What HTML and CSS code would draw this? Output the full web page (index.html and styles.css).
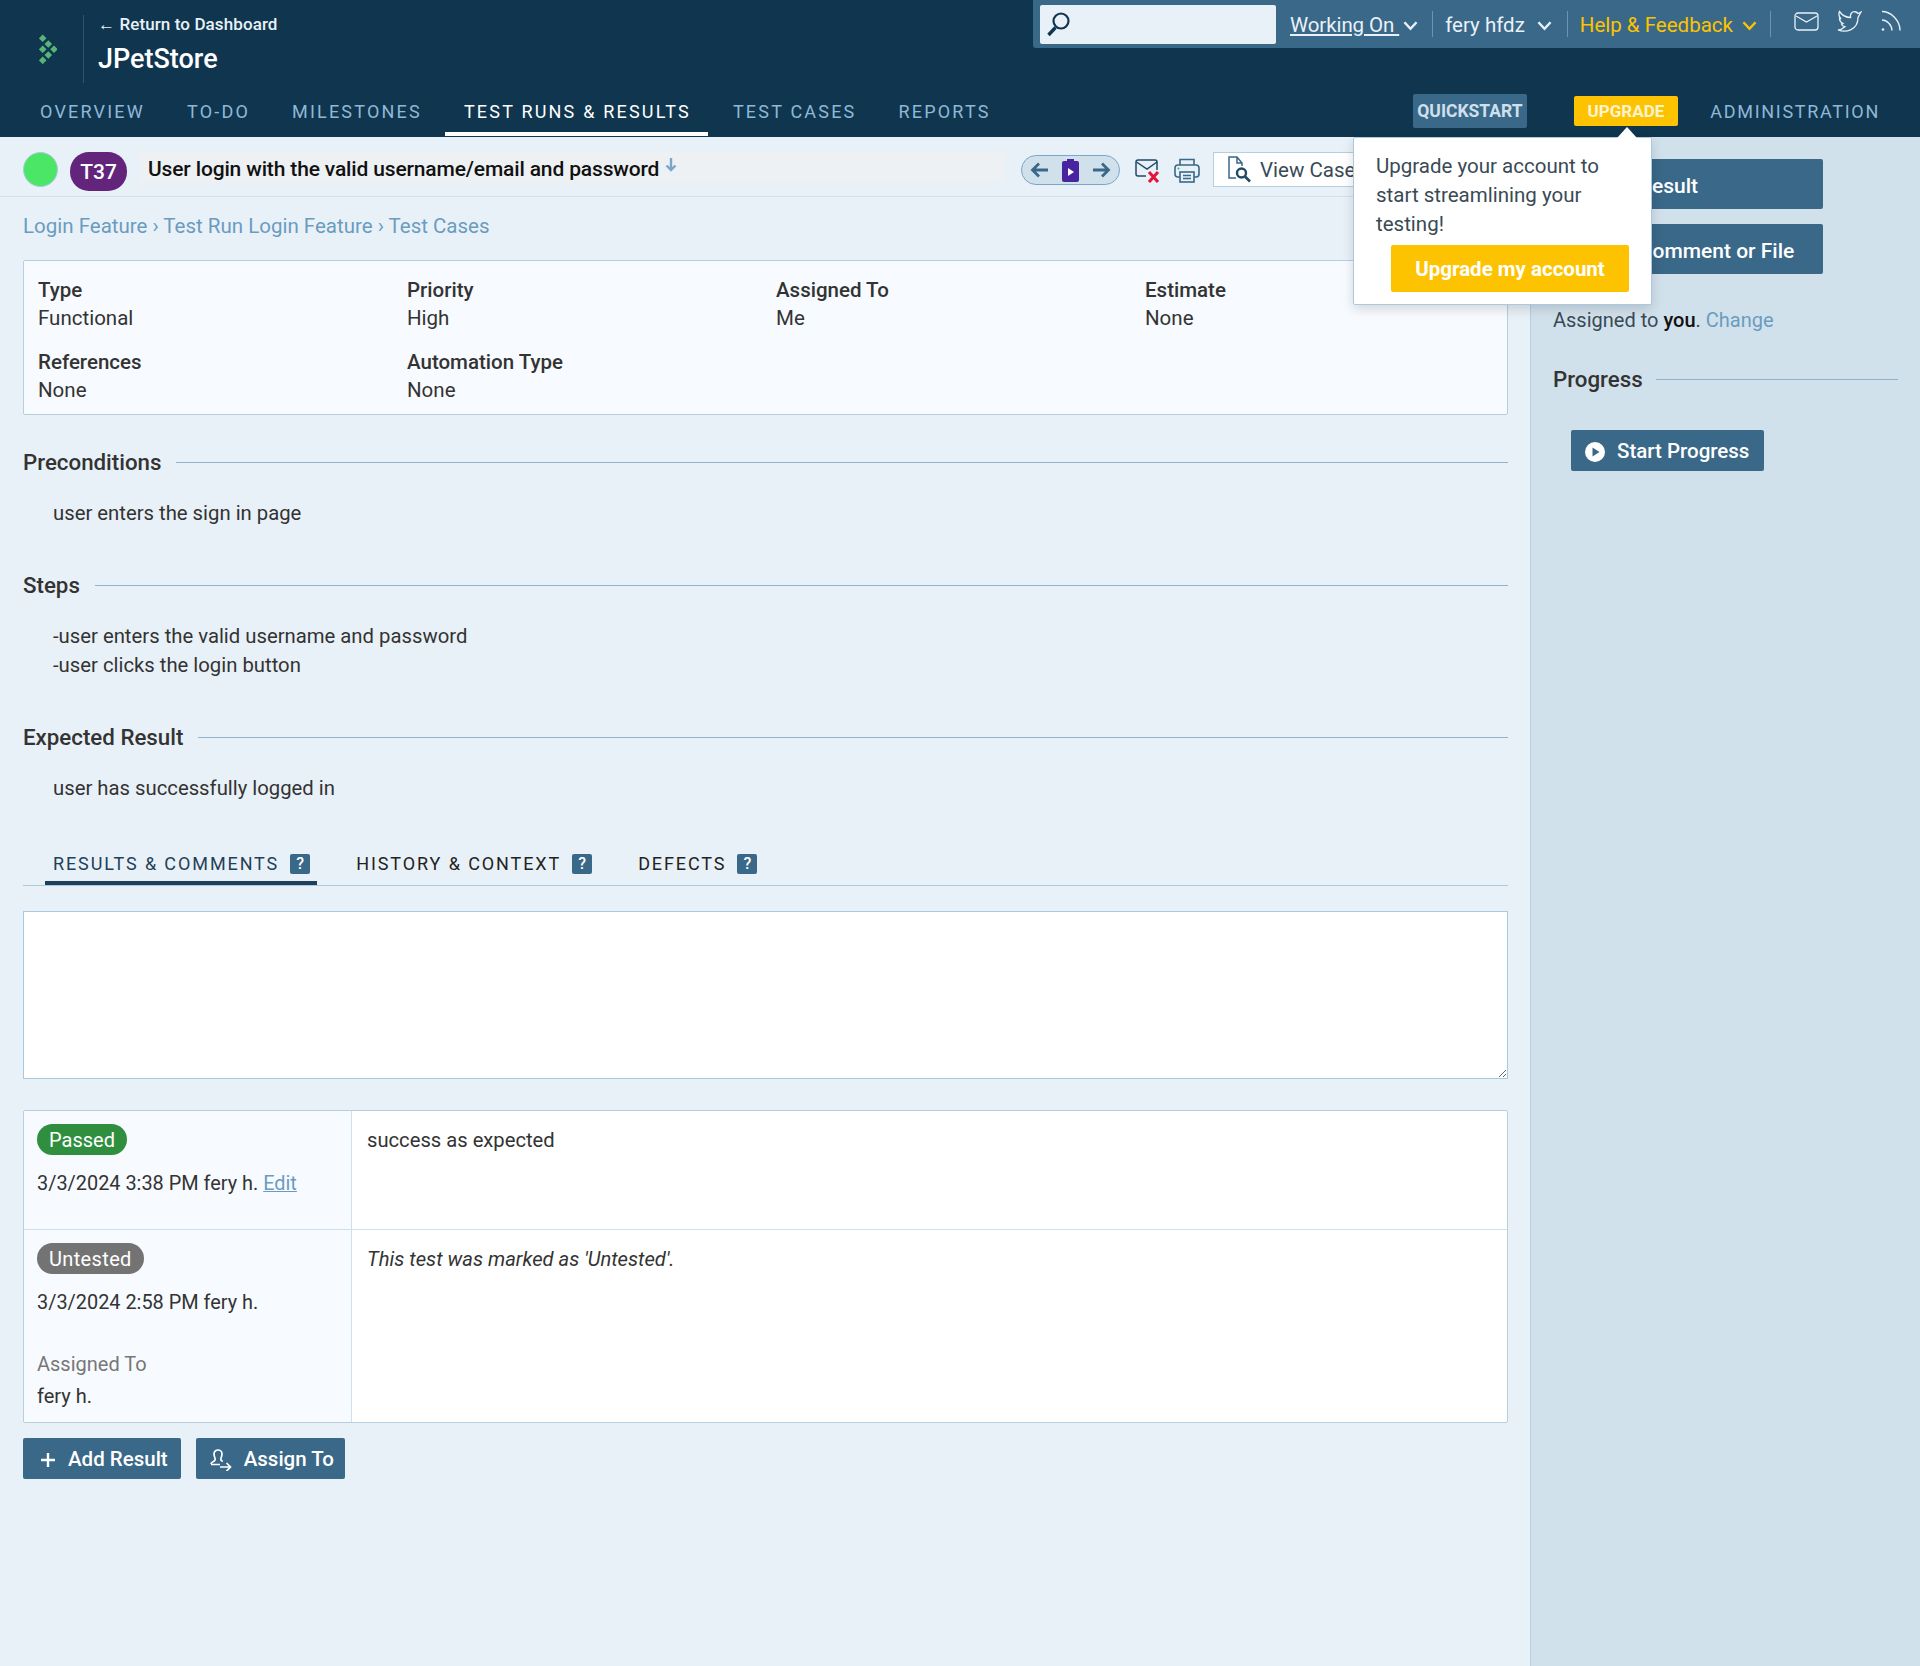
FILE: index.html
```html
<!DOCTYPE html>
<html lang="en">
<head>
  <meta charset="UTF-8">
  <meta name="viewport" content="width=device-width, initial-scale=1.0">
  <title>T37: User login with the valid username/email and password</title>
  <link rel="stylesheet" href="styles.css">
</head>
<body>

  <header class="header">
    <div class="header-top">
      <div class="brand">
        <svg class="logo" width="18" height="30" viewBox="0 0 18 30">
          <g fill="#57b677">
            <path d="M3.700.5l3.800 3.800-3.800 3.800L-.1 4.300z"/>
            <path d="M9.300 6.200l3.800 3.800-3.800 3.800L5.500 10z"/>
            <path d="M3.700 11.500l3.800 3.800-3.800 3.800-3.800-3.800z"/>
            <path d="M15 11.500l3.800 3.800-3.800 3.800-3.800-3.800z"/>
            <path d="M9.300 17.200l3.800 3.800-3.800 3.800L5.500 21z"/>
            <path d="M3.700 22.500l3.800 3.800-3.800 3.800-3.800-3.800z"/>
          </g>
        </svg>
        <div class="brand-text">
          <a class="back-link" href="#">← Return to Dashboard</a>
          <div class="project-name">JPetStore</div>
        </div>
      </div>
      <div class="topbar">
        <div class="search">
          <svg width="26" height="26" viewBox="0 0 26 26" fill="none" stroke="#10364f" stroke-width="2.200">
            <circle cx="16" cy="10" r="7.500"/>
            <path d="M10.500 16.500L3.500 24" stroke-width="3.400"/>
          </svg>
        </div>
        <a class="topbar-link first" href="#"><span class="underlined">Working On&nbsp;</span> <svg class="chevron" width="17" height="11" viewBox="0 0 14 10"><path d="M1.500 2l5.500 6 5.500-6"/></svg></a>
        <a class="topbar-link bordered" href="#">fery hfdz <svg class="chevron wide" width="17" height="11" viewBox="0 0 14 10"><path d="M1.500 2l5.500 6 5.500-6"/></svg></a>
        <a class="topbar-link bordered yellow" href="#">Help &amp; Feedback <svg class="chevron" width="17" height="11" viewBox="0 0 14 10"><path d="M1.500 2l5.500 6 5.500-6"/></svg></a>
        <div class="topbar-icons">
          <svg width="25" height="19" viewBox="0 0 25 19" fill="none" stroke="#e9f1f8" stroke-width="1.300"><rect x="1" y="1" width="23" height="17" rx="3"/><path d="M2 4l10.500 6L23 4"/></svg>
          <svg width="25" height="22" viewBox="0 0 25 22" fill="none" stroke="#e9f1f8" stroke-width="1.300"><path d="M24 2l-3 1.500C19.500 1.500 16 1 14.500 3c-1 1.200-1.200 3-.9 4.500C9.500 7.500 5 5 2.500 1.500c-1 2.500-.5 5.500 1.500 7.500L2.500 8.500c0 2.500 1.500 4 3.500 5L4.500 14c.7 2 2 2.500 3.500 2.800C6 18.500 3.500 20 1 20c8 3 20 0 20-12.500z"/></svg>
          <svg width="22" height="22" viewBox="0 0 22 22" fill="none" stroke="#e9f1f8" stroke-width="1.400"><path d="M2 1.500c9 0 18 9 18 19M2 10c5 0 10 5 10 10.500"/><circle cx="3" cy="19.500" r="1.300" fill="#e9f1f8" stroke="none"/></svg>
        </div>
      </div>
    </div>
    <nav class="nav">
      <a class="nav-item" href="#">OVERVIEW</a>
      <a class="nav-item" href="#">TO-DO</a>
      <a class="nav-item" href="#">MILESTONES</a>
      <a class="nav-item active" href="#">TEST RUNS &amp; RESULTS</a>
      <a class="nav-item" href="#">TEST CASES</a>
      <a class="nav-item" href="#">REPORTS</a>
      <div class="nav-right">
        <a class="quickstart" href="#">QUICKSTART</a>
        <a class="upgrade" href="#">UPGRADE</a>
        <a class="nav-item admin" href="#">ADMINISTRATION</a>
      </div>
    </nav>
  </header>

  <div class="popup">
    <span class="popup-arrow"></span>
    <p>Upgrade your account to start streamlining your testing!</p>
    <a class="popup-button" href="#">Upgrade my account</a>
  </div>

  <div class="page">
    <main class="content">
      <div class="titlebar">
        <span class="status-dot"></span>
        <span class="test-id">T37</span>
        <div class="test-title">
          User login with the valid username/email and password
          <svg class="title-arrow" width="14" height="16" viewBox="0 0 14 16" fill="none" stroke="#7aa7c7" stroke-width="2.400"><path d="M7 1v12M2.500 8.500L7 13l4.500-4.500"/></svg>
        </div>
        <div class="title-tools">
          <div class="pager">
            <svg width="20" height="18" viewBox="0 0 20 18" fill="none" stroke="#3a6888" stroke-width="2.800"><path d="M18 9H3M9 2.500L2.500 9 9 15.500"/></svg>
            <svg width="17" height="23" viewBox="0 0 17 23"><rect x="0" y="2" width="17" height="21" rx="2" fill="#4a24a0"/><rect x="5" y="0" width="7" height="3" fill="#4a24a0"/><path d="M6 9l6 4-6 4z" fill="#fff"/></svg>
            <svg width="20" height="18" viewBox="0 0 20 18" fill="none" stroke="#3a6888" stroke-width="2.800"><path d="M2 9h15M11 2.500L17.500 9 11 15.500"/></svg>
          </div>
          <svg class="mail-icon" width="26" height="24" viewBox="0 0 26 24" fill="none"><path d="M11 17H3a2 2 0 0 1-2-2V3a2 2 0 0 1 2-2h17a2 2 0 0 1 2 2v8" stroke="#1f4a66" stroke-width="1.500"/><path d="M1.500 3l10.500 7 10-7" stroke="#1f4a66" stroke-width="1.500"/><path d="M14 13l9 10M23 13l-9 10" stroke="#e8123c" stroke-width="3"/></svg>
          <svg class="print-icon" width="26" height="25" viewBox="0 0 26 25" fill="none" stroke="#3a6888" stroke-width="1.600"><path d="M6 7V1.500h14V7"/><rect x="1" y="7" width="24" height="12" rx="3"/><rect x="6" y="14" width="14" height="10" fill="#e9f1f8"/><path d="M9 17.500h8M9 20.500h8"/><circle cx="4.500" cy="10.500" r="1" fill="#2fb35a" stroke="none"/></svg>
          <a class="view-case" href="#">
            <svg width="24" height="27" viewBox="0 0 24 27" fill="none" stroke="#3a6888" stroke-width="1.500"><path d="M8 22H1V1h8l5 6v3M9 1v6h5"/><circle cx="13.500" cy="17" r="4.500" stroke="#1f4a66" stroke-width="2.400"/><path d="M17 20.500l5 5" stroke="#1f4a66" stroke-width="2.600"/></svg>
            <span class="view-case-text">View Case</span>
          </a>
        </div>
      </div>

      <div class="content-body">
        <div class="breadcrumb">
          <a href="#">Login Feature</a> › <a href="#">Test Run Login Feature</a> › <a href="#">Test Cases</a>
        </div>

        <div class="info-box">
          <div class="info-item"><b>Type</b><span>Functional</span></div>
          <div class="info-item"><b>Priority</b><span>High</span></div>
          <div class="info-item"><b>Assigned To</b><span>Me</span></div>
          <div class="info-item"><b>Estimate</b><span>None</span></div>
          <div class="info-item"><b>References</b><span>None</span></div>
          <div class="info-item"><b>Automation Type</b><span>None</span></div>
        </div>

        <section class="section">
          <h2 class="section-title">Preconditions</h2>
          <p>user enters the sign in page</p>
        </section>
        <section class="section">
          <h2 class="section-title">Steps</h2>
          <p>-user enters the valid username and password<br>-user clicks the login button</p>
        </section>
        <section class="section">
          <h2 class="section-title">Expected Result</h2>
          <p>user has successfully logged in</p>
        </section>

        <div class="tabs">
          <a class="tab active" href="#">RESULTS &amp; COMMENTS <i class="help">?</i></a>
          <a class="tab" href="#">HISTORY &amp; CONTEXT <i class="help">?</i></a>
          <a class="tab" href="#">DEFECTS <i class="help">?</i></a>
        </div>

        <textarea class="comment-box"></textarea>

        <div class="results">
          <div class="result-row first">
            <div class="result-meta">
              <span class="badge passed">Passed</span>
              <div class="result-date">3/3/2024 3:38 PM fery h. <a href="#">Edit</a></div>
            </div>
            <div class="result-text">success as expected</div>
          </div>
          <div class="result-row second">
            <div class="result-meta">
              <span class="badge untested">Untested</span>
              <div class="result-date">3/3/2024 2:58 PM fery h.</div>
              <div class="result-label">Assigned To</div>
              <div class="result-value">fery h.</div>
            </div>
            <div class="result-text"><em>This test was marked as 'Untested'.</em></div>
          </div>
        </div>

        <div class="actions">
          <a class="btn" href="#">
            <svg class="plus-icon" width="16" height="16" viewBox="0 0 16 16" stroke="#fff" stroke-width="2.400"><path d="M8 1v14M1 8h14"/></svg>
            Add Result
          </a>
          <a class="btn assign-btn" href="#">
            <svg width="22" height="22" viewBox="0 0 22 22" fill="none" stroke="#fff" stroke-width="1.700"><path d="M1 15c0-2 3-2 4-4 .8-1.500-1-3-1-6a4 4 0 0 1 8 0c0 3-1.800 4.500-1 6 .3.600 1 1 1.800 1.500M1 15.500h9M10 18h10M16.500 14l4 4-4 4"/></svg>
            Assign To
          </a>
        </div>
      </div>
    </main>

    <aside class="sidebar">
      <a class="side-btn" href="#">Add Result</a>
      <a class="side-btn" href="#">Add Comment or File</a>
      <div class="assigned">Assigned to <b>you</b>. <a href="#">Change</a></div>
      <h2 class="section-title side-title">Progress</h2>
      <a class="btn start-btn" href="#">
        <svg width="20" height="20" viewBox="0 0 20 20"><circle cx="10" cy="10" r="10" fill="#fff"/><path d="M7.500 5.500l7 4.500-7 4.500z" fill="#3a6888"/></svg>
        Start Progress
      </a>
    </aside>
  </div>

</body>
</html>
```

FILE: styles.css
```css
* {
  box-sizing: border-box;
}
body {
  margin: 0;
  font-family: Roboto, Arial, sans-serif;
  font-size: 20px;
  line-height: 1.6;
  color: #333;
  background-color: #e9f1f8;
}
a {
  color: #6a9cc0;
  text-decoration: none;
}

/* header */
.header {
  height: 137px;
  background-color: #10364f;
  display: flex;
  flex-direction: column;
  justify-content: space-between;
}
.header-top {
  display: flex;
  justify-content: space-between;
  align-items: flex-start;
}
.brand {
  display: flex;
  align-items: center;
  padding: 15px 0 0 39px;
}
.logo {
  margin-right: 26px;
}
.brand-text {
  border-left: 1px solid #2a5673;
  padding-left: 14px;
  height: 68px;
}
.back-link {
  display: block;
  color: #e9f1f8;
  font-size: 17px;
  font-weight: 500;
  line-height: 18px;
  letter-spacing: 0.1px;
}
.project-name {
  color: #fff;
  font-size: 27px;
  font-weight: 500;
  line-height: 30px;
  margin-top: 11px;
}
.topbar {
  width: 887px;
  height: 48px;
  background-color: #3a6888;
  border-radius: 0 0 0 3px;
  display: flex;
  align-items: center;
  padding-left: 7px;
}
.search {
  width: 236px;
  height: 39px;
  background-color: #e9f1f8;
  border-radius: 2px;
  padding: 6px 0 0 5px;
  flex: none;
}
.topbar-link {
  display: flex;
  align-items: center;
  gap: 8px;
  height: 26px;
  color: #e9f1f8;
  font-size: 20.500px;
  white-space: nowrap;
  padding: 2px 14px 0 14px;
}
.topbar-link.first {
  gap: 3px;
  padding-right: 13px;
}
.underlined {
  text-decoration: underline;
  letter-spacing: -0.1px;
}
.bordered {
  border-left: 1px solid #6a94b0;
  padding-left: 12px;
}
.yellow {
  color: #fdc300;
  padding-right: 12px;
}
.chevron {
  fill: none;
  stroke: currentColor;
  stroke-width: 2.200;
}
.chevron.wide {
  margin-left: 3px;
}
.topbar-icons {
  flex: 1;
  height: 26px;
  display: flex;
  align-items: center;
  gap: 18px;
  padding: 0 0 6px 23px;
  border-left: 1px solid #6a94b0;
}
.nav {
  display: flex;
  align-items: stretch;
  height: 49px;
  padding: 0 40px 1px 21px;
}
.nav-item {
  color: #8fb8d6;
  font-size: 18px;
  letter-spacing: 2.200px;
  line-height: 48px;
  padding: 0 17px 0 19px;
  margin-right: 6px;
  white-space: nowrap;
}
.nav-item.active {
  color: #fff;
  border-bottom: 4px solid #fff;
}
.nav-right {
  margin-left: auto;
  display: flex;
  align-items: flex-start;
}
.quickstart {
  margin-top: 6px;
  height: 34px;
  line-height: 34px;
  padding: 0 4px;
  background-color: #3a6888;
  color: #cfe0ec;
  font-size: 17.500px;
  font-weight: 700;
  border-radius: 2px;
  margin-right: 47px;
}
.upgrade {
  margin-top: 8px;
  height: 30px;
  line-height: 30px;
  padding: 0 14px;
  background-color: #fdc300;
  color: #fdf3d0;
  font-size: 17px;
  font-weight: 700;
  border-radius: 2px;
}
.admin {
  padding: 0 0 0 32px;
  margin: 0;
  letter-spacing: 1.700px;
}

/* upgrade popup */
.popup {
  position: absolute;
  left: 1353px;
  top: 137px;
  width: 299px;
  height: 168px;
  background-color: #fff;
  border: 1px solid #a9c9e0;
  border-radius: 2px;
  padding: 14px 22px;
  box-shadow: 0 4px 12px rgba(0, 0, 0, 0.15);
  z-index: 5;
}
.popup p {
  margin: 0;
  font-size: 20.500px;
  line-height: 29px;
  color: #3a4a55;
}
.popup-arrow {
  position: absolute;
  left: 263px;
  top: -11px;
  border-left: 10px solid transparent;
  border-right: 10px solid transparent;
  border-bottom: 11px solid #fff;
}
.popup-button {
  display: block;
  width: 238px;
  height: 47px;
  margin: 6px 0 0 15px;
  background-color: #fdc300;
  color: #fff;
  font-size: 20.500px;
  font-weight: 700;
  line-height: 48px;
  text-align: center;
  border-radius: 2px;
}

/* page columns */
.page {
  display: flex;
  min-height: 1529px;
}
.content {
  width: 1530px;
  flex: none;
}
.sidebar {
  flex: 1;
  background-color: #d1e1ec;
  border-left: 1px solid #b5cfe0;
  padding: 22px 22px 0 22px;
}

/* title bar */
.titlebar {
  height: 60px;
  border-bottom: 1px solid #cfe0ec;
  display: flex;
  align-items: flex-start;
  padding: 15px 0 0 23px;
}
.status-dot {
  width: 35px;
  height: 35px;
  border-radius: 50%;
  background-color: #4ce667;
  border: 1px solid #a9c9e0;
  flex: none;
}
.test-id {
  width: 57px;
  height: 39px;
  margin-left: 12px;
  border-radius: 19px;
  background-color: #63257c;
  color: #fff;
  font-size: 21px;
  font-weight: 500;
  line-height: 41px;
  text-align: center;
  flex: none;
}
.test-title {
  width: 866px;
  height: 30px;
  margin: 0 16px 0 12px;
  padding: 2px 0 0 9px;
  flex: none;
  background-color: #eef1f4;
  color: #111;
  font-size: 21px;
  font-weight: 500;
  line-height: 30px;
  letter-spacing: -0.15px;
}
.title-arrow {
  vertical-align: 3px;
}
.title-tools {
  display: flex;
  align-items: flex-start;
}
.pager {
  width: 99px;
  height: 30px;
  margin-top: 3px;
  border: 1px solid #7aa7c7;
  border-radius: 15px;
  background-color: #d1e1ec;
  display: flex;
  align-items: center;
  justify-content: space-between;
  padding: 0 8px;
  flex: none;
}
.mail-icon {
  margin: 7px 0 0 15px;
  flex: none;
}
.print-icon {
  margin: 6px 0 0 13px;
  flex: none;
}
.view-case {
  display: flex;
  align-items: center;
  gap: 8px;
  width: 315px;
  height: 35px;
  margin-left: 13px;
  padding-left: 14px;
  background-color: #fff;
  border: 1px solid #b5cfe0;
  color: #3a4a55;
  font-size: 20.500px;
  flex: none;
}
.view-case-text {
  padding-top: 2px;
}

/* main body */
.content-body {
  padding: 0 22px 0 23px;
}
.breadcrumb {
  height: 63px;
  padding-top: 13px;
  font-size: 20.500px;
  color: #6a9cc0;
}
.info-box {
  height: 155px;
  background-color: #f7fbff;
  border: 1px solid #b5cfe0;
  border-radius: 2px;
  display: grid;
  grid-template-columns: repeat(4, 369px);
  grid-template-rows: 72px 72px;
  padding: 15px 0 0 14px;
}
.info-item {
  display: flex;
  flex-direction: column;
  line-height: 28px;
  font-size: 20.500px;
}
.info-item b {
  font-weight: 500;
}
.section {
  margin-top: 32px;
  padding-bottom: 9px;
}
.section + .section {
  margin-top: 33px;
}
.section-title {
  margin: 0;
  font-size: 22.300px;
  font-weight: 500;
  line-height: 30px;
  display: flex;
  align-items: center;
  gap: 15px;
}
.section-title::after {
  content: "";
  flex: 1;
  border-top: 1px solid #8fb3cc;
}
.section p {
  margin: 22px 0 0 30px;
  font-size: 20.300px;
  line-height: 29px;
}

/* tabs */
.tabs {
  margin-top: 37px;
  height: 37px;
  border-bottom: 1px solid #a9c9e0;
  padding-left: 22px;
  display: flex;
  gap: 31px;
}
.tab {
  display: flex;
  align-items: center;
  gap: 11px;
  height: 36px;
  padding: 0 7px 6px 8px;
  color: #222;
  font-size: 18px;
  letter-spacing: 1.900px;
  white-space: nowrap;
}
.tab.active {
  color: #1f4058;
  border-bottom: 4px solid #1f4058;
  padding-bottom: 2px;
}
.help {
  width: 20px;
  height: 20px;
  background-color: #3a6888;
  color: #fff;
  border-radius: 2px;
  font-size: 16px;
  font-style: normal;
  font-weight: 500;
  letter-spacing: 0;
  line-height: 20px;
  text-align: center;
}
.comment-box {
  display: block;
  width: 1485px;
  height: 168px;
  margin-top: 25px;
  background-color: #fff;
  border: 1px solid #a9c9e0;
}

/* results table */
.results {
  margin-top: 31px;
  background-color: #fff;
  border: 1px solid #b5cfe0;
  border-radius: 2px;
}
.result-row {
  display: flex;
}
.result-row.first {
  height: 119px;
  border-bottom: 1px solid #cfe0ec;
}
.result-row.second {
  height: 192px;
}
.result-meta {
  width: 328px;
  background-color: #f7fbff;
  border-right: 1px solid #cfe0ec;
  padding: 13px 13px 0;
}
.result-text {
  flex: 1;
  padding: 16px 15px 0;
  font-size: 20.200px;
  line-height: 26px;
}
.badge {
  display: inline-block;
  height: 31px;
  padding: 0 12px;
  border-radius: 16px;
  color: #fff;
  font-size: 20px;
  line-height: 32px;
}
.passed {
  background-color: #2f8f3f;
}
.untested {
  background-color: #737373;
  letter-spacing: 0.35px;
}
.result-date {
  margin-top: 14px;
  font-size: 19.900px;
  line-height: 28px;
  white-space: nowrap;
}
.result-date a {
  text-decoration: underline;
}
.result-label {
  margin-top: 33px;
  color: #777;
  font-size: 20px;
  line-height: 28px;
}
.result-value {
  margin-top: 4px;
  font-size: 20px;
  line-height: 28px;
}

/* buttons */
.actions {
  margin-top: 15px;
  display: flex;
  gap: 15px;
}
.btn {
  display: inline-flex;
  align-items: center;
  gap: 12px;
  height: 41px;
  padding: 2px 13px 0 14px;
  background-color: #3a6888;
  color: #fff;
  font-size: 20.500px;
  font-weight: 500;
  border-radius: 2px;
}
.plus-icon {
  margin-left: 3px;
}
.assign-btn {
  padding-right: 11px;
}
.side-btn {
  display: block;
  width: 270px;
  height: 50px;
  margin-bottom: 15px;
  padding-left: 43px;
  background-color: #3a6888;
  color: #fff;
  font-size: 21px;
  font-weight: 500;
  line-height: 54px;
  border-radius: 2px;
}
.assigned {
  margin-top: 31px;
  line-height: 30px;
  color: #3a4a55;
}
.assigned b {
  color: #111;
  font-weight: 500;
}
.side-title {
  margin-top: 29px;
  gap: 13px;
}
.start-btn {
  margin: 36px 0 0 18px;
  padding-right: 15px;
}
```
